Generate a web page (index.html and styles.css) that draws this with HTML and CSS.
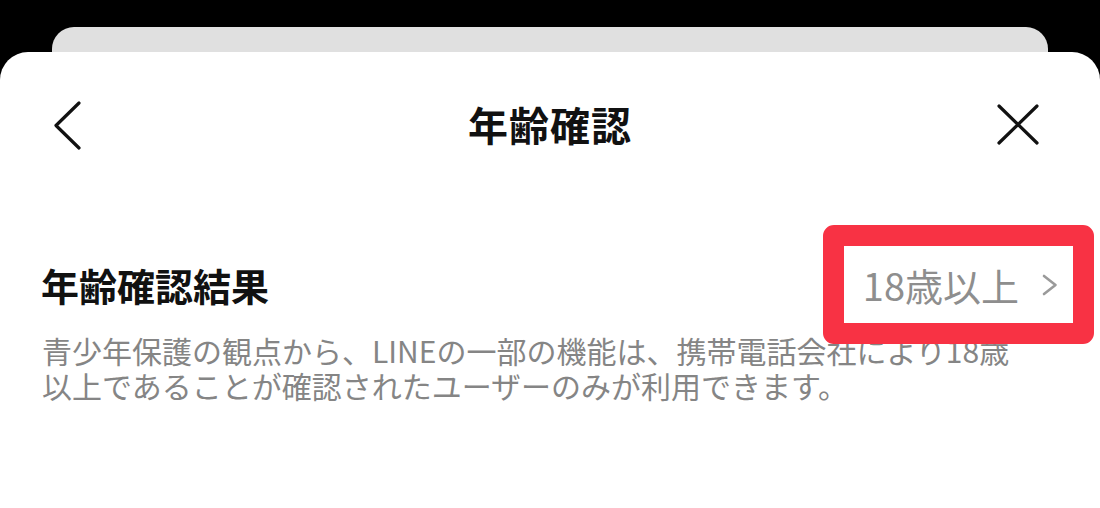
FILE: index.html
```html
<!DOCTYPE html>
<html lang="ja">
<head>
<meta charset="utf-8">
<title>年齢確認</title>
<link rel="stylesheet" href="styles.css">
</head>
<body>
<div class="screen">
  <div class="back-card"></div>
  <div class="sheet">
    <header class="header">
      <button class="icon-btn back" aria-label="戻る">
        <svg width="30" height="49" viewBox="0 0 30 49"><path d="M27 2 L4 24.5 L27 47" fill="none" stroke="#111" stroke-width="3.2" stroke-linecap="round" stroke-linejoin="round"/></svg>
      </button>
      <h1 class="title">年齢確認</h1>
      <button class="icon-btn close" aria-label="閉じる">
        <svg width="42" height="41" viewBox="0 0 42 41"><path d="M2 2 L40 39 M40 2 L2 39" fill="none" stroke="#111" stroke-width="3.2" stroke-linecap="round"/></svg>
      </button>
    </header>
    <main class="content">
      <div class="row">
        <span class="row-label">年齢確認結果</span>
        <span class="row-value">
          <span class="value-text">18歳以上</span>
          <svg class="chev" width="16" height="22" viewBox="0 0 16 22"><path d="M2 2 L13.5 11 L2 20" fill="none" stroke="#9a9a9a" stroke-width="2.6" stroke-linecap="round" stroke-linejoin="round"/></svg>
          <span class="highlight"></span>
        </span>
      </div>
      <p class="desc">青少年保護の観点から、LINEの一部の機能は、携帯電話会社により18歳<br>以上であることが確認されたユーザーのみが利用できます。</p>
    </main>
  </div>
</div>
</body>
</html>
```
FILE: styles.css
```css
html, body {
  margin: 0;
  padding: 0;
  background: #000;
}
body {
  font-family: "Noto Sans CJK JP", "Noto Sans", sans-serif;
  width: 1100px;
  height: 508px;
  overflow: hidden;
}
.screen {
  display: flex;
  flex-direction: column;
  height: 508px;
  padding-top: 27px;
  box-sizing: border-box;
}
.back-card {
  height: 25px;
  margin: 0 52px;
  background: #e0e0e0;
  border-radius: 22px 22px 0 0;
  flex: none;
}
.sheet {
  flex: 1;
  background: #fff;
  border-radius: 28px 28px 0 0;
  display: flex;
  flex-direction: column;
}
.header {
  height: 144px;
  display: flex;
  align-items: center;
  justify-content: space-between;
  padding: 0 61px 0 52px;
  position: relative;
}
.icon-btn {
  background: none;
  border: 0;
  padding: 0;
  margin: 0;
  display: flex;
  align-items: center;
  justify-content: center;
}
.back svg { display: block; margin-top: 3px; }
.close svg { display: block; margin-top: 1px; }
.title {
  margin: 0;
  font-size: 40px;
  font-weight: 700;
  color: #111;
  letter-spacing: 1px;
  position: absolute;
  left: 0;
  right: 0;
  text-align: center;
  pointer-events: none;
  line-height: 1;
}
.content {
  padding: 41px 42px 0 41px;
}
.row {
  height: 96px;
  display: flex;
  align-items: center;
  justify-content: space-between;
}
.row-label {
  font-size: 38px;
  font-weight: 700;
  color: #111;
  line-height: 1;
}
.row-value {
  position: relative;
  display: flex;
  align-items: center;
  height: 46px;
}
.value-text {
  font-size: 38px;
  color: #8e8e8e;
  line-height: 1;
}
.chev {
  display: block;
  margin-left: 23px;
}
.highlight {
  position: absolute;
  left: -40px;
  right: -36px;
  top: -37px;
  bottom: -36px;
  border: 21px solid #f83244;
  border-radius: 11px;
  box-sizing: border-box;
}
.desc {
  margin: 0;
  font-size: 30px;
  line-height: 35px;
  color: #858585;
  padding-left: 1px;
}
```
